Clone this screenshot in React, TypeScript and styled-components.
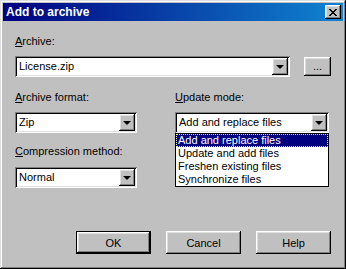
import React from "react";
import styled, { createGlobalStyle } from "styled-components";

const GlobalStyle = createGlobalStyle`
  html, body {
    margin: 0;
    padding: 0;
    background: #c0c0c0;
  }
  * {
    box-sizing: border-box;
  }
`;

const raised = `
  box-shadow: inset -1px -1px #000000, inset 1px 1px #ffffff,
    inset -2px -2px #808080, inset 2px 2px #dfdfdf;
`;

const sunken = `
  box-shadow: inset 1px 1px #808080, inset -1px -1px #ffffff,
    inset 2px 2px #000000, inset -2px -2px #dfdfdf;
`;

const Window = styled.div`
  width: 346px;
  height: 269px;
  padding: 3px;
  display: flex;
  flex-direction: column;
  background: #c0c0c0;
  font-family: "Liberation Sans", Arial, sans-serif;
  font-size: 11px;
  color: #000;
  box-shadow: inset -1px -1px #000000, inset 1px 1px #dfdfdf,
    inset -2px -2px #808080, inset 2px 2px #ffffff;
`;

const TitleBar = styled.div`
  height: 18px;
  display: flex;
  align-items: center;
  justify-content: space-between;
  padding: 0 2px 0 3px;
  background: linear-gradient(to right, #000080, #1084d0);
`;

const Title = styled.span`
  color: #fff;
  font-weight: bold;
  font-size: 12px;
`;

const CloseButton = styled.div`
  width: 16px;
  height: 14px;
  display: flex;
  align-items: center;
  justify-content: center;
  background: #c0c0c0;
  ${raised}
`;

const Content = styled.div`
  flex: 1;
  display: flex;
  flex-direction: column;
  padding: 14px 12px 12px 12px;
`;

const Label = styled.div`
  line-height: 13px;
  height: 13px;
  white-space: nowrap;
  & u {
    text-decoration: underline;
    text-underline-offset: 1px;
  }
`;

const Row = styled.div`
  display: flex;
  align-items: flex-start;
  gap: 14px;
  margin-top: 8px;
`;

const Columns = styled.div`
  display: grid;
  grid-template-columns: 122px 154px;
  column-gap: 38px;
  margin-top: 14px;
`;

const Column = styled.div`
  display: flex;
  flex-direction: column;
`;

const Field = styled.div<{ $gap: number }>`
  margin-top: ${({ $gap }) => $gap}px;
`;

const ComboBox = styled.div<{ $width: number }>`
  position: relative;
  width: ${({ $width }) => $width}px;
  height: 21px;
  padding: 2px;
  display: flex;
  background: #fff;
  ${sunken}
`;

const ComboText = styled.div`
  flex: 1;
  padding-left: 2px;
  line-height: 17px;
  white-space: nowrap;
  overflow: hidden;
`;

const DropButton = styled.div`
  width: 16px;
  height: 17px;
  display: flex;
  align-items: center;
  justify-content: center;
  background: #c0c0c0;
  ${raised}
`;

const Arrow = styled.div`
  width: 0;
  height: 0;
  border-left: 4px solid transparent;
  border-right: 4px solid transparent;
  border-top: 4px solid #000;
  margin-top: 1px;
`;

const DropList = styled.ul`
  position: absolute;
  top: 100%;
  left: 0;
  right: 0;
  margin: 0;
  padding: 0;
  list-style: none;
  background: #fff;
  border: 1px solid #000;
  z-index: 2;
`;

const DropItem = styled.li<{ $selected?: boolean }>`
  height: 13px;
  line-height: 13px;
  padding-left: 2px;
  white-space: nowrap;
  background: ${({ $selected }) => ($selected ? "#000080" : "transparent")};
  color: ${({ $selected }) => ($selected ? "#fff" : "#000")};
  outline: ${({ $selected }) => ($selected ? "1px dotted #ffff80" : "none")};
  outline-offset: -1px;
`;

const Button = styled.div<{ $default?: boolean }>`
  width: 75px;
  height: 23px;
  display: flex;
  align-items: center;
  justify-content: center;
  background: #c0c0c0;
  ${({ $default }) =>
    $default
      ? `box-shadow: inset 0 0 0 1px #000, inset -2px -2px #000, inset 2px 2px #fff,
          inset -3px -3px #808080, inset 3px 3px #dfdfdf;`
      : raised}
`;

const BrowseButton = styled.div`
  width: 27px;
  height: 19px;
  margin-top: 1px;
  display: flex;
  align-items: flex-end;
  justify-content: center;
  padding-bottom: 4px;
  line-height: 11px;
  background: #c0c0c0;
  ${raised}
`;

const ButtonRow = styled.div`
  margin-top: auto;
  display: flex;
  justify-content: flex-end;
  gap: 15px;
`;

function Combo({
  width,
  value,
  options,
}: {
  width: number;
  value: string;
  options?: string[];
}) {
  return (
    <ComboBox $width={width}>
      <ComboText>{value}</ComboText>
      <DropButton>
        <Arrow />
      </DropButton>
      {options && (
        <DropList>
          {options.map((o) => (
            <DropItem key={o} $selected={o === value}>
              {o}
            </DropItem>
          ))}
        </DropList>
      )}
    </ComboBox>
  );
}

export default function App() {
  return (
    <>
      <GlobalStyle />
      <Window>
        <TitleBar>
          <Title>Add to archive</Title>
          <CloseButton>
            <svg width="8" height="7" viewBox="0 0 8 7">
              <path
                d="M0 0h2v1h1v1h2V1h1V0h2v1H7v1H6v1H5v1h1v1h1v1h1v1H6V6H5V5H3v1H2v1H0V6h1V5h1V4h1V3H2V2H1V1H0z"
                fill="#000"
              />
            </svg>
          </CloseButton>
        </TitleBar>
        <Content>
          <Label>
            <u>A</u>rchive:
          </Label>
          <Row>
            <Combo width={275} value="License.zip" />
            <BrowseButton>...</BrowseButton>
          </Row>
          <Columns>
            <Column>
              <Label>
                <u>A</u>rchive format:
              </Label>
              <Field $gap={8}>
                <Combo width={122} value="Zip" />
              </Field>
              <Field $gap={12}>
                <Label>
                  <u>C</u>ompression method:
                </Label>
              </Field>
              <Field $gap={9}>
                <Combo width={122} value="Normal" />
              </Field>
            </Column>
            <Column>
              <Label>
                <u>U</u>pdate mode:
              </Label>
              <Field $gap={8}>
                <Combo
                  width={154}
                  value="Add and replace files"
                  options={[
                    "Add and replace files",
                    "Update and add files",
                    "Freshen existing files",
                    "Synchronize files",
                  ]}
                />
              </Field>
            </Column>
          </Columns>
          <ButtonRow>
            <Button $default>OK</Button>
            <Button>Cancel</Button>
            <Button>Help</Button>
          </ButtonRow>
        </Content>
      </Window>
    </>
  );
}
